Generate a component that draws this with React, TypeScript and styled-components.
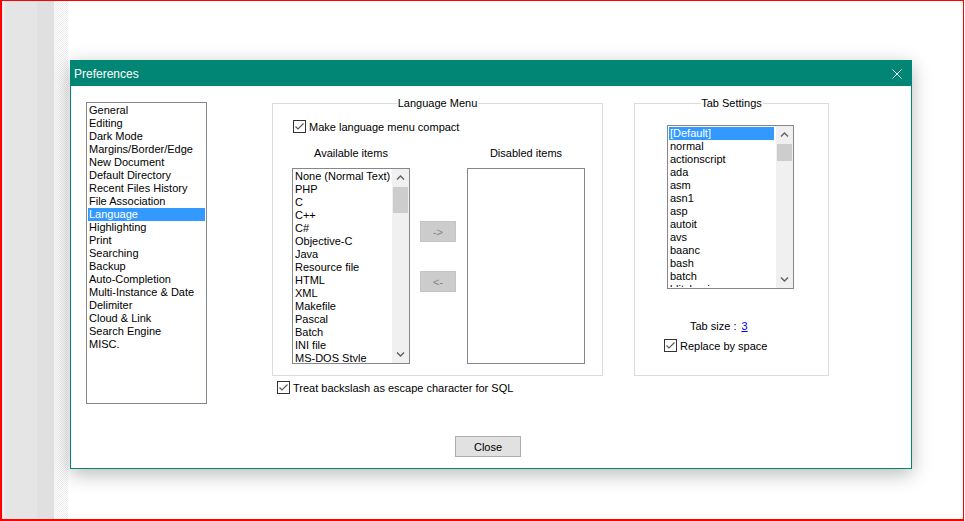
import styled, { createGlobalStyle } from 'styled-components';

const teal = '#018574';

const GlobalStyle = createGlobalStyle`
  html, body {
    margin: 0;
    padding: 0;
    background: #fff;
    font-family: 'Liberation Sans', Arial, sans-serif;
  }
`;

const Screen = styled.div`
  box-sizing: border-box;
  width: 964px;
  height: 521px;
  border-style: solid;
  border-color: #ff0000;
  border-width: 1px 1px 2px 2px;
  display: flex;
  overflow: hidden;
  background: #fff;
`;

const Gutter = styled.div`
  width: 66px;
  flex-shrink: 0;
  background:
    linear-gradient(to right, #ececec 0 3px, #e5e5e5 3px 35px, #e0e0e0 35px 52px, transparent 52px),
    repeating-conic-gradient(#ececec 0 25%, #ffffff 0 50%) 0 0 / 2px 2px;
`;

const Desktop = styled.div`
  flex: 1;
  padding: 59px 0 0 2px;
`;

const Window = styled.div`
  width: 842px;
  box-sizing: border-box;
  border: 1px solid ${teal};
  background: #fff;
  box-shadow: 0 5px 18px rgba(0, 0, 0, 0.28);
  display: flex;
  flex-direction: column;
`;

const TitleBar = styled.div`
  height: 25px;
  background: ${teal};
  color: #fff;
  display: flex;
  align-items: center;
  justify-content: space-between;
  padding: 0 9px 0 3px;
  font-size: 12px;
`;

const CloseGlyph = styled.svg`
  width: 10px;
  height: 10px;
`;

const Body = styled.div`
  display: flex;
  align-items: flex-start;
  padding: 16px 0 0 15px;
`;

const LanguageColumn = styled.div`
  margin: 1px 31px 0 65px;
  display: flex;
  flex-direction: column;
`;

const GroupBox = styled.div<{ w: number }>`
  position: relative;
  box-sizing: border-box;
  width: ${p => p.w}px;
  height: 273px;
  border: 1px solid #dcdcdc;
`;

const GroupTitle = styled.span`
  position: absolute;
  top: -7px;
  left: 50%;
  transform: translateX(-50%);
  background: #fff;
  padding: 0 1px;
  font-size: 11px;
  line-height: 13px;
  color: #000;
  white-space: nowrap;
`;

const LanguageInner = styled.div`
  padding: 16px 0 0 19px;
`;

const ItemsGrid = styled.div`
  display: grid;
  grid-template-columns: 118px 37px 118px;
  grid-template-rows: 13px 196px;
  column-gap: 10px;
  row-gap: 8px;
  margin-top: 14px;
`;

const ColumnLabel = styled.div`
  font-size: 11px;
  line-height: 13px;
  text-align: center;
  color: #000;
`;

const ArrowStack = styled.div`
  display: flex;
  flex-direction: column;
  gap: 29px;
  padding-top: 53px;
`;

const ArrowButton = styled.div`
  width: 36px;
  height: 21px;
  box-sizing: border-box;
  background: #cccccc;
  border: 1px solid #c4c4c4;
  color: #838383;
  font-size: 11px;
  display: flex;
  align-items: center;
  justify-content: center;
`;

const ListBox = styled.div<{ w: number; h: number }>`
  box-sizing: border-box;
  width: ${p => p.w}px;
  height: ${p => p.h}px;
  border: 1px solid #828790;
  background: #fff;
  padding: 1px 0 1px 1px;
  display: flex;
  overflow: hidden;
`;

const Items = styled.div<{ withBar?: boolean }>`
  flex: 1;
  min-width: 0;
  margin-right: ${p => (p.withBar ? '2px' : '1px')};
  overflow: hidden;
`;

const Item = styled.div<{ selected?: boolean }>`
  height: 13px;
  line-height: 13px;
  font-size: 11px;
  padding-left: 1px;
  white-space: nowrap;
  color: ${p => (p.selected ? '#fff' : '#000')};
  background: ${p => (p.selected ? '#3399ff' : 'transparent')};
`;

const ScrollTrack = styled.div`
  width: 17px;
  flex-shrink: 0;
  margin: -1px 0;
  background: #f0f0f0;
  display: flex;
  flex-direction: column;
`;

const ScrollArrow = styled.svg`
  width: 17px;
  height: 17px;
  flex-shrink: 0;
`;

const Thumb = styled.div<{ h: number }>`
  margin: 1px 1px 0;
  height: ${p => p.h}px;
  background: #cdcdcd;
`;

const Spacer = styled.div`
  flex: 1;
`;

const CheckRow = styled.label<{ indent?: number; top?: number }>`
  display: flex;
  align-items: center;
  gap: 3px;
  height: 13px;
  margin-left: ${p => p.indent ?? 0}px;
  margin-top: ${p => p.top ?? 0}px;
  font-size: 11px;
  color: #000;
  white-space: nowrap;
`;

const CheckSvg = styled.svg`
  width: 13px;
  height: 13px;
  flex-shrink: 0;
`;

const TabInner = styled.div`
  padding: 21px 0 0 32px;
`;

const TabSizeRow = styled.div`
  margin: 31px 0 0 23px;
  font-size: 11px;
  line-height: 13px;
  color: #000;
`;

const Link = styled.span`
  color: #0000ff;
  text-decoration: underline;
  margin-left: 5px;
`;

const TabColumn = styled.div`
  margin-top: 1px;
`;

const Footer = styled.div`
  display: flex;
  justify-content: center;
  padding: 32px 6px 11px 0;
`;

const PushButton = styled.div`
  width: 66px;
  height: 21px;
  box-sizing: border-box;
  background: #e1e1e1;
  border: 1px solid #adadad;
  font-size: 11px;
  color: #000;
  display: flex;
  align-items: center;
  justify-content: center;
`;

const navItems = [
  'General', 'Editing', 'Dark Mode', 'Margins/Border/Edge', 'New Document',
  'Default Directory', 'Recent Files History', 'File Association', 'Language',
  'Highlighting', 'Print', 'Searching', 'Backup', 'Auto-Completion',
  'Multi-Instance & Date', 'Delimiter', 'Cloud & Link', 'Search Engine', 'MISC.',
];

const availableItems = [
  'None (Normal Text)', 'PHP', 'C', 'C++', 'C#', 'Objective-C', 'Java',
  'Resource file', 'HTML', 'XML', 'Makefile', 'Pascal', 'Batch', 'INI file',
  'MS-DOS Style',
];

const tabItems = [
  '[Default]', 'normal', 'actionscript', 'ada', 'asm', 'asn1', 'asp', 'autoit',
  'avs', 'baanc', 'bash', 'batch', 'blitzbasic',
];

const Check = () => (
  <CheckSvg viewBox="0 0 13 13">
    <rect x="0.5" y="0.5" width="12" height="12" fill="#fff" stroke="#333" />
    <polyline points="2.5,6.5 5,9 10.5,3.5" fill="none" stroke="#5a5a5a" strokeWidth="1.2" />
  </CheckSvg>
);

const Checkbox = ({ label, indent, top }: { label: string; indent?: number; top?: number }) => (
  <CheckRow indent={indent} top={top}>
    <Check />
    {label}
  </CheckRow>
);

const Scrollbar = ({ thumb }: { thumb: number }) => (
  <ScrollTrack>
    <ScrollArrow viewBox="0 0 17 17">
      <polyline points="5,10.5 8.5,7 12,10.5" fill="none" stroke="#606060" strokeWidth="1.4" />
    </ScrollArrow>
    <Thumb h={thumb} />
    <Spacer />
    <ScrollArrow viewBox="0 0 17 17">
      <polyline points="5,6.5 8.5,10 12,6.5" fill="none" stroke="#606060" strokeWidth="1.4" />
    </ScrollArrow>
  </ScrollTrack>
);

export default function App() {
  return (
    <>
      <GlobalStyle />
      <Screen>
        <Gutter />
        <Desktop>
          <Window>
            <TitleBar>
              <span>Preferences</span>
              <CloseGlyph viewBox="0 0 10 10">
                <path d="M0.5 0.5 L9.5 9.5 M9.5 0.5 L0.5 9.5" stroke="#fff" strokeWidth="1" />
              </CloseGlyph>
            </TitleBar>

            <Body>
              <ListBox w={121} h={302}>
                <Items>
                  {navItems.map(item => (
                    <Item key={item} selected={item === 'Language'}>{item}</Item>
                  ))}
                </Items>
              </ListBox>

              <LanguageColumn>
                <GroupBox w={331}>
                  <GroupTitle>Language Menu</GroupTitle>
                  <LanguageInner>
                    <Checkbox label="Make language menu compact" indent={1} />
                    <ItemsGrid>
                      <ColumnLabel>Available items</ColumnLabel>
                      <div />
                      <ColumnLabel>Disabled items</ColumnLabel>
                      <ListBox w={118} h={196}>
                        <Items withBar>
                          {availableItems.map(item => (
                            <Item key={item}>{item}</Item>
                          ))}
                        </Items>
                        <Scrollbar thumb={26} />
                      </ListBox>
                      <ArrowStack>
                        <ArrowButton>-&gt;</ArrowButton>
                        <ArrowButton>&lt;-</ArrowButton>
                      </ArrowStack>
                      <ListBox w={118} h={196} />
                    </ItemsGrid>
                  </LanguageInner>
                </GroupBox>
                <Checkbox label="Treat backslash as escape character for SQL" indent={5} top={5} />
              </LanguageColumn>

              <TabColumn>
                <GroupBox w={195}>
                  <GroupTitle>Tab Settings</GroupTitle>
                  <TabInner>
                    <ListBox w={127} h={164}>
                      <Items withBar>
                        {tabItems.map(item => (
                          <Item key={item} selected={item === '[Default]'}>{item}</Item>
                        ))}
                      </Items>
                      <Scrollbar thumb={17} />
                    </ListBox>
                    <TabSizeRow>
                      Tab size :<Link>3</Link>
                    </TabSizeRow>
                  </TabInner>
                  <Checkbox label="Replace by space" indent={29} top={6} />
                </GroupBox>
              </TabColumn>
            </Body>

            <Footer>
              <PushButton>Close</PushButton>
            </Footer>
          </Window>
        </Desktop>
      </Screen>
    </>
  );
}
